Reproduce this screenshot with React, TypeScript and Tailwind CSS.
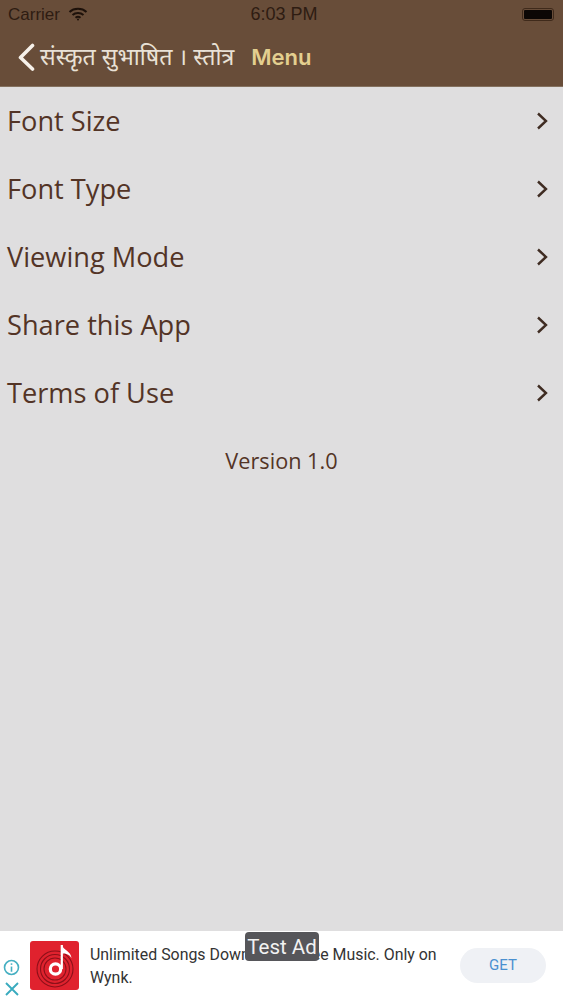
import React from 'react';

const menuItems = ['Font Size', 'Font Type', 'Viewing Mode', 'Share this App', 'Terms of Use'];

const StatusBar = () => (
  <div className="flex h-[28px] items-center justify-between pl-[8px] pr-[9px] pt-[1px] font-['Liberation_Sans',sans-serif] text-[#2e1c12]">
    <div className="flex w-[193px] items-center gap-[8px]">
      <span className="text-[17px]">Carrier</span>
      <svg width="20" height="14" viewBox="0 0 20 14" fill="none" stroke="#1d110a" strokeWidth="2" className="mb-[2px]">
        <path d="M1.5 5 C6 0.8 14 0.8 18.5 5" />
        <path d="M4.5 8 C7.5 5.4 12.5 5.4 15.5 8" />
        <path d="M7.5 10.8 C9 9.6 11 9.6 12.5 10.8" />
        <circle cx="10" cy="12.6" r="1" fill="#1d110a" stroke="none" />
      </svg>
    </div>
    <span className="text-[18px] font-medium">6:03 PM</span>
    <div className="flex w-[187px] justify-end">
      <div className="flex h-[13px] w-[32px] items-center justify-center rounded-[3px] border border-[#3f2a1b]">
        <div className="h-[9px] w-[28px] rounded-[1px] bg-[#0c0705]" />
      </div>
    </div>
  </div>
);

const NavBar = () => (
  <div className="flex h-[58px] items-start pl-[17px] pt-[12px]">
    <svg width="18" height="28" viewBox="0 0 18 28" fill="none" stroke="#f6f1ea" strokeWidth="3.6" strokeLinecap="round" strokeLinejoin="round" className="mt-[3px]">
      <path d="M15.5 2.5 L3.5 14.5 L15.5 26" />
    </svg>
    <span className="ml-[5px] whitespace-nowrap font-['Noto_Sans','Noto_Sans_Devanagari','Lohit_Devanagari',sans-serif] text-[23.2px] leading-[33px] text-[#e9e1d6]">
      संस्कृत सुभाषित । स्तोत्र
    </span>
    <span className="ml-[17px] font-['Inter',sans-serif] text-[22px] font-semibold leading-[34px] text-[#e3cf8f]">Menu</span>
  </div>
);

const AdBanner = () => (
  <div className="relative flex h-[69px] items-start bg-white font-['Roboto',sans-serif]">
    <div className="flex h-full w-[30px] flex-col items-start justify-end pb-[3px] pl-[3px]">
      <svg width="17" height="17" viewBox="0 0 18 18" fill="none" stroke="#45afc2" strokeWidth="1.7">
        <circle cx="9" cy="9" r="7.4" />
        <path d="M9 8 V13.5" />
        <path d="M9 4.6 V6.2" />
      </svg>
      <svg width="16" height="16" viewBox="0 0 16 16" fill="none" stroke="#3aabbf" strokeWidth="1.9" className="ml-[1px] mt-[5px]">
        <path d="M2 2 L14 14 M14 2 L2 14" />
      </svg>
    </div>
    <div className="mt-[10px] h-[49px] w-[49px] overflow-hidden rounded-[3px] bg-[#e0222e]">
      <svg width="49" height="49" viewBox="0 0 49 49" fill="none">
        <circle cx="25" cy="28" r="18" stroke="#8d1019" strokeWidth="1.1" />
        <circle cx="25" cy="28" r="14.5" stroke="#8d1019" strokeWidth="1.1" />
        <circle cx="25" cy="28" r="11" stroke="#8d1019" strokeWidth="1.1" />
        <circle cx="25.5" cy="28" r="5.2" stroke="#fff" strokeWidth="3.2" />
        <path d="M31.8 28 V4" stroke="#fff" strokeWidth="2.2" />
        <path d="M32 4 C33 9 41 10 41.5 17 C39 13 35 12.5 32 12.5 Z" fill="#fff" />
      </svg>
    </div>
    <p className="ml-[11px] mt-[12px] w-[356px] text-[15.9px] leading-[23px] text-[#333333]">
      Unlimited Songs Download &amp; Free Music. Only on Wynk.
    </p>
    <div className="ml-[14px] mt-[17px] flex h-[35px] w-[86px] items-center justify-center rounded-full bg-[#eff1f5] text-[15px] text-[#4a90d0]">
      GET
    </div>
    <div className="absolute left-[245px] top-[1px] flex h-[29px] w-[74px] items-center justify-center rounded-[4px] bg-[#56565a] pt-[1px] text-[20.5px] text-[#f2f2f2]">
      Test Ad
    </div>
  </div>
);

export default function App() {
  return (
    <div className="flex h-[1000px] w-[563px] flex-col overflow-hidden bg-[#dfdedf]">
      <div className="bg-[#684d39] border-b border-[#84715f]">
        <StatusBar />
        <NavBar />
      </div>
      <div className="flex-1">
        {menuItems.map((item) => (
          <div key={item} className="flex h-[68px] items-center justify-between pl-[7px] pr-[13px]">
            <span className="font-['Open_Sans',sans-serif] text-[27.2px] text-[#533426]">{item}</span>
            <svg width="16" height="20" viewBox="0 0 16 20" fill="none" stroke="#3f2c22" strokeWidth="2.4">
              <path d="M4 2.5 L12 10 L4 17.5" />
            </svg>
          </div>
        ))}
        <p className="pt-[18px] text-center font-['Open_Sans',sans-serif] text-[21.7px] text-[#533426]">Version 1.0</p>
      </div>
      <AdBanner />
    </div>
  );
}
